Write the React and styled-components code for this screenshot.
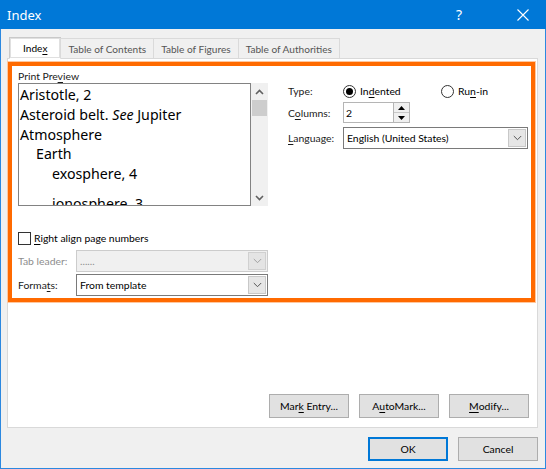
import React from "react";
import styled, { createGlobalStyle } from "styled-components";

const Global = createGlobalStyle`
  html, body { margin: 0; padding: 0; background: #fff; }
  body { font-family: "Lato", "Noto Sans", sans-serif; }
  * { box-sizing: border-box; }
`;

const UI = "10.4px";

const Window = styled.div`
  width: 546px;
  height: 469px;
  border: 1px solid #2b88e0;
  border-top: none;
  background: #f0f0f0;
  display: flex;
  flex-direction: column;
  font-size: ${UI};
  color: #000;
`;

const TitleBar = styled.div`
  height: 29px;
  background: #0078d7;
  color: #fff;
  display: flex;
  align-items: center;
  padding-left: 7px;
  margin: 0 -1px;
  font-size: 13px;
  font-family: "Noto Sans", sans-serif;
`;

const Title = styled.div`
  flex: 1;
`;

const TitleBtn = styled.div`
  width: 46px;
  height: 29px;
  display: flex;
  align-items: center;
  justify-content: center;
  font-size: 14px;
  margin-left: ${(p) => p.$ml || 0}px;
`;

const Body = styled.div`
  flex: 1;
  display: flex;
  flex-direction: column;
  padding: 8px 7px 7px 6px;
`;

const Tabs = styled.div`
  display: flex;
  align-items: flex-end;
  margin-left: 2px;
  height: 21px;
  position: relative;
  z-index: 1;
`;

const Tab = styled.div`
  height: ${(p) => (p.$active ? "22px" : "20px")};
  padding: 0 ${(p) => (p.$active ? "13px" : "7px")};
  display: flex;
  align-items: center;
  border: 1px solid ${(p) => (p.$active ? "#c9c9c9" : "#dadada")};
  border-bottom: ${(p) => (p.$active ? "1px solid #fff" : "none")};
  background: ${(p) => (p.$active ? "#fff" : "#f0f0f0")};
  color: ${(p) => (p.$active ? "#000" : "#555")};
  margin-right: -1px;
  margin-bottom: ${(p) => (p.$active ? "-1px" : "0")};
  font-size: 10.1px;
  box-shadow: ${(p) => (p.$active ? "inset 0 0 0 1px #e0e0e0" : "none")};
`;

const Panel = styled.div`
  flex: 1;
  background: #fff;
  border: 1px solid #d9d9d9;
  display: flex;
  flex-direction: column;
  padding: 3px 2px 9px 0;
`;

const Highlight = styled.div`
  border: 4px solid #ff6a00;
  box-shadow: 0 0 0 1px #ffc79e;
  height: 240px;
  display: grid;
  grid-template-columns: 250px 1fr;
  column-gap: 20px;
  padding: 3px 3px 0 6px;
`;

const LeftCol = styled.div`
  display: flex;
  flex-direction: column;
`;

const RightCol = styled.div`
  display: grid;
  grid-template-columns: 55px 1fr;
  grid-template-rows: 14px 21px 22px;
  align-content: start;
  row-gap: 4px;
  align-items: center;
  padding-top: 15px;
`;

const SmallLabel = styled.div`
  font-size: ${UI};
  color: ${(p) => (p.$disabled ? "#8d8d8d" : "#1a1a1a")};
  height: 14px;
  line-height: 14px;
  white-space: nowrap;
`;

const PreviewWrap = styled.div`
  display: flex;
  height: 123px;
  width: 250px;
`;

const PreviewBox = styled.div`
  width: 233px;
  border: 1px solid #828282;
  overflow: hidden;
  padding: 1px 0 0 1px;
  font-size: 14.2px;
  line-height: 19.8px;
  color: #000;
  font-family: "Noto Sans", sans-serif;
`;

const PreviewLine = styled.div`
  padding-left: ${(p) => p.$indent * 16}px;
  margin-top: ${(p) => p.$mt || 0}px;
  white-space: nowrap;
`;

const Scrollbar = styled.div`
  width: 17px;
  background: #f0f0f0;
  display: flex;
  flex-direction: column;
  align-items: center;
`;

const ScrollArrow = styled.div`
  height: 17px;
  width: 17px;
  display: flex;
  align-items: center;
  justify-content: center;
`;

const Thumb = styled.div`
  width: 15px;
  height: 16px;
  background: #cdcdcd;
`;

const ScrollSpace = styled.div`
  flex: 1;
`;

const CheckRow = styled.label`
  display: flex;
  align-items: center;
  gap: 3px;
  margin-top: 25px;
  height: 14px;
  font-size: ${UI};
`;

const CheckBox = styled.span`
  width: 13px;
  height: 13px;
  border: 1px solid #333;
  background: #fff;
  display: inline-block;
`;

const FieldRow = styled.div`
  display: grid;
  grid-template-columns: 58px 192px;
  align-items: center;
  height: 22px;
  margin-top: ${(p) => p.$mt || 0}px;
`;

const Select = styled.div`
  height: 22px;
  border: 1px solid ${(p) => (p.$disabled ? "#cccccc" : "#7a7a7a")};
  background: ${(p) => (p.$disabled ? "#f0f0f0" : "#fff")};
  color: ${(p) => (p.$disabled ? "#8d8d8d" : "#000")};
  display: flex;
  align-items: center;
  font-size: ${UI};
`;

const SelectText = styled.div`
  flex: 1;
  padding-left: 3px;
  white-space: nowrap;
`;

const DropBtn = styled.div`
  width: 18px;
  align-self: stretch;
  margin: 1px;
  background: ${(p) => (p.$disabled ? "#e4e4e4" : "#e6e6e6")};
  border: 1px solid ${(p) => (p.$disabled ? "#d0d0d0" : "#c8c8c8")};
  display: flex;
  align-items: center;
  justify-content: center;
`;

const RadioGroup = styled.div`
  display: flex;
  align-items: center;
  font-size: ${UI};
`;

const RadioItem = styled.div`
  display: flex;
  align-items: center;
  gap: 4px;
  width: ${(p) => p.$w || "auto"};
`;

const RadioCircle = styled.span`
  width: 13px;
  height: 13px;
  border-radius: 50%;
  border: 1px solid #333;
  display: flex;
  align-items: center;
  justify-content: center;
  &::after {
    content: "";
    width: 7px;
    height: 7px;
    border-radius: 50%;
    background: ${(p) => (p.$checked ? "#000" : "transparent")};
  }
`;

const Spin = styled.div`
  display: flex;
  height: 21px;
  width: 67px;
`;

const SpinInput = styled.div`
  width: 51px;
  border: 1px solid #b5b5b5;
  display: flex;
  align-items: center;
  padding-left: 2px;
  font-size: ${UI};
`;

const SpinBtns = styled.div`
  width: 16px;
  display: flex;
  flex-direction: column;
  border: 1px solid #b5b5b5;
  border-left: none;
`;

const SpinBtn = styled.div`
  flex: 1;
  display: flex;
  align-items: center;
  justify-content: center;
  background: #f0f0f0;
  & + & {
    border-top: 1px solid #c8c8c8;
  }
`;

const Spacer = styled.div`
  flex: 1;
`;

const ButtonRow = styled.div`
  display: flex;
  justify-content: flex-end;
  gap: ${(p) => p.$gap || 10}px;
  padding-right: ${(p) => p.$pr || 0}px;
`;

const Button = styled.div`
  width: ${(p) => p.$w || 79}px;
  height: 24px;
  background: #e1e1e1;
  border: 1px solid ${(p) => (p.$default ? "#0078d7" : "#adadad")};
  box-shadow: ${(p) => (p.$default ? "inset 0 0 0 1px #0078d7" : "none")};
  display: flex;
  align-items: center;
  justify-content: center;
  font-size: ${UI};
  color: #000;
`;

const Footer = styled.div`
  margin-top: 9px;
`;

const U = styled.span`
  text-decoration: underline;
  text-underline-offset: 2px;
`;

const Chevron = ({ color = "#555" }) => (
  <svg width="9" height="6" viewBox="0 0 9 6">
    <path d="M0.8 1 L4.5 4.7 L8.2 1" fill="none" stroke={color} strokeWidth="1" />
  </svg>
);

const ScrollChevron = ({ up }) => (
  <svg width="9" height="6" viewBox="0 0 9 6">
    <path
      d={up ? "M1 5 L4.5 1.5 L8 5" : "M1 1 L4.5 4.5 L8 1"}
      fill="none"
      stroke="#606060"
      strokeWidth="1.6"
    />
  </svg>
);

const Tri = ({ up }) => (
  <svg width="7" height="4" viewBox="0 0 7 4">
    <path d={up ? "M0 4 L3.5 0 L7 4 Z" : "M0 0 L3.5 4 L7 0 Z"} fill="#000" />
  </svg>
);

const CloseIcon = () => (
  <svg width="12" height="12" viewBox="0 0 12 12">
    <path d="M0.5 0.5 L11.5 11.5 M11.5 0.5 L0.5 11.5" stroke="#fff" strokeWidth="1.1" />
  </svg>
);

export default function App() {
  return (
    <>
      <Global />
      <Window>
        <TitleBar>
          <Title>Index</Title>
          <TitleBtn>?</TitleBtn>
          <TitleBtn $ml={18}>
            <CloseIcon />
          </TitleBtn>
        </TitleBar>
        <Body>
          <Tabs>
            <Tab $active>
              Inde<U>x</U>
            </Tab>
            <Tab>Table of Contents</Tab>
            <Tab>Table of Figures</Tab>
            <Tab>Table of Authorities</Tab>
          </Tabs>
          <Panel>
            <Highlight>
              <LeftCol>
                <SmallLabel>
                  Print Pre<U>v</U>iew
                </SmallLabel>
                <PreviewWrap>
                  <PreviewBox>
                    <PreviewLine $indent={0}>Aristotle, 2</PreviewLine>
                    <PreviewLine $indent={0}>
                      Asteroid belt. <i>See</i> Jupiter
                    </PreviewLine>
                    <PreviewLine $indent={0}>Atmosphere</PreviewLine>
                    <PreviewLine $indent={1}>Earth</PreviewLine>
                    <PreviewLine $indent={2}>exosphere, 4</PreviewLine>
                    <PreviewLine $indent={2} $mt={10}>
                      ionosphere, 3
                    </PreviewLine>
                  </PreviewBox>
                  <Scrollbar>
                    <ScrollArrow>
                      <ScrollChevron up />
                    </ScrollArrow>
                    <Thumb />
                    <ScrollSpace />
                    <ScrollArrow>
                      <ScrollChevron />
                    </ScrollArrow>
                  </Scrollbar>
                </PreviewWrap>
                <CheckRow>
                  <CheckBox />
                  <span>
                    <U>R</U>ight align page numbers
                  </span>
                </CheckRow>
                <FieldRow $mt={5}>
                  <SmallLabel $disabled>Tab leader:</SmallLabel>
                  <Select $disabled>
                    <SelectText>......</SelectText>
                    <DropBtn $disabled>
                      <Chevron color="#a0a0a0" />
                    </DropBtn>
                  </Select>
                </FieldRow>
                <FieldRow $mt={2}>
                  <SmallLabel>
                    Forma<U>t</U>s:
                  </SmallLabel>
                  <Select>
                    <SelectText>From template</SelectText>
                    <DropBtn>
                      <Chevron />
                    </DropBtn>
                  </Select>
                </FieldRow>
              </LeftCol>
              <RightCol>
                <SmallLabel>Type:</SmallLabel>
                <RadioGroup>
                  <RadioItem $w="98px">
                    <RadioCircle $checked />
                    <span>
                      In<U>d</U>ented
                    </span>
                  </RadioItem>
                  <RadioItem>
                    <RadioCircle />
                    <span>
                      Ru<U>n</U>-in
                    </span>
                  </RadioItem>
                </RadioGroup>
                <SmallLabel>
                  C<U>o</U>lumns:
                </SmallLabel>
                <Spin>
                  <SpinInput>2</SpinInput>
                  <SpinBtns>
                    <SpinBtn>
                      <Tri up />
                    </SpinBtn>
                    <SpinBtn>
                      <Tri />
                    </SpinBtn>
                  </SpinBtns>
                </Spin>
                <SmallLabel>
                  <U>L</U>anguage:
                </SmallLabel>
                <Select>
                  <SelectText>English (United States)</SelectText>
                  <DropBtn>
                    <Chevron />
                  </DropBtn>
                </Select>
              </RightCol>
            </Highlight>
            <Spacer />
            <ButtonRow $gap={10} $pr={6}>
              <Button $w={80}>
                Mar<U>k</U>&nbsp;Entry...
              </Button>
              <Button $w={80}>
                A<U>u</U>toMark...
              </Button>
              <Button $w={80}>
                <U>M</U>odify...
              </Button>
            </ButtonRow>
          </Panel>
          <Footer>
            <ButtonRow $gap={10} $pr={0}>
              <Button $default $w={80}>
                OK
              </Button>
              <Button $w={80}>Cancel</Button>
            </ButtonRow>
          </Footer>
        </Body>
      </Window>
    </>
  );
}
